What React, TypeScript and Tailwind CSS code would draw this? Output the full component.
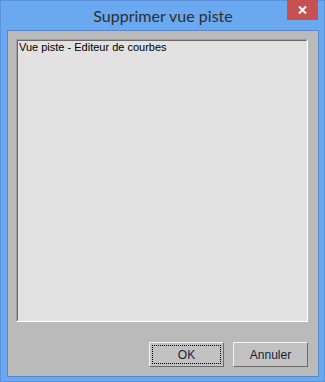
export default function App() {
  return (
    <div className="w-[325px] h-[382px] bg-[#6aa8f0] border border-[#5a93dc] flex flex-col pl-[6px] pr-[5px] pb-[4px]">
      {/* Title bar */}
      <div className="relative h-[29px] shrink-0 flex items-center justify-center">
        <span className="text-[16px] text-[#2f2f2f] leading-none pt-[1px] font-['Lato',sans-serif]">
          Supprimer vue piste
        </span>
        <div className="absolute top-[-1px] right-[1px] w-[31px] h-[20px] bg-[#c75050] flex items-center justify-center">
          <svg width="9" height="8" viewBox="0 0 9 8">
            <path d="M1 0.5 L8 7.5 M8 0.5 L1 7.5" stroke="#fff" strokeWidth="2" />
          </svg>
        </div>
      </div>

      {/* Client area */}
      <div className="flex-1 bg-[#bababa] border border-[#5889c9] flex flex-col pt-[8px] pl-[8px] pr-[10px]">
        <div className="h-[283px] bg-[#e2e2e2] border-t border-l border-[#a0a0a0] border-b border-r border-b-white border-r-white">
          <div className="h-full border-t border-l border-[#696969] border-b border-r border-b-[#e3e3e3] border-r-[#e3e3e3] px-[1px]">
            <div className="text-[11px] leading-[13px] text-black font-['Liberation_Sans',sans-serif]">
              Vue piste - Editeur de courbes
            </div>
          </div>
        </div>

        <div className="mt-[20px] flex justify-end gap-[9px]">
          <button className="w-[75px] h-[25px] bg-[#c2c2c2] border border-t-[#f4f4f4] border-l-[#f4f4f4] border-b-[#6a6a6a] border-r-[#6a6a6a] p-[2px]">
            <div className="h-full border border-dotted border-black flex items-center justify-center text-[12px] text-[#1b1b3a] font-['Liberation_Sans',sans-serif]">
              OK
            </div>
          </button>
          <button className="w-[75px] h-[25px] bg-[#c2c2c2] border border-t-[#f4f4f4] border-l-[#f4f4f4] border-b-[#6a6a6a] border-r-[#6a6a6a] flex items-center justify-center text-[12px] text-[#1b1b3a] font-['Liberation_Sans',sans-serif]">
            Annuler
          </button>
        </div>
      </div>
    </div>
  )
}
